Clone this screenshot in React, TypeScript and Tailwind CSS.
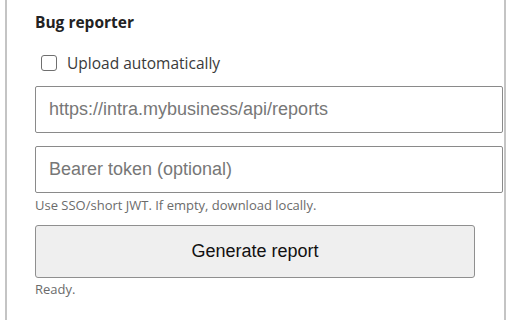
import React from 'react'

const App = () => {
  return (
    <div className="w-[512px] h-[320px] overflow-hidden bg-white">
      {/* panel, only the side borders show in the frame */}
      <div className="ml-[5px] w-[501px] h-[320px] border-x-2 border-[#c4c4c4] bg-white pl-[28px] pt-[11px] font-['Open_Sans',sans-serif]">
        <h3 className="text-[15.5px] font-bold leading-[22px] text-[#222]">Bug reporter</h3>

        <label className="mt-[19px] ml-[6px] flex items-center gap-x-[10px] text-[15.5px] leading-[22px] text-[#3a3a3a]">
          <span className="inline-block h-[16px] w-[16px] rounded-[3px] border-[1.5px] border-[#6f6f6f] bg-white" />
          <span>Upload automatically</span>
        </label>

        <input
          className="mt-[12px] block h-[47px] w-[468px] border border-[#8a8a8a] rounded-[2px] bg-white px-[13px] text-[18px] font-['Liberation_Sans',Arial,sans-serif] text-[#222] outline-none placeholder:text-[#777]"
          placeholder="https://intra.mybusiness/api/reports"
        />

        <input
          className="mt-[13px] block h-[47px] w-[468px] border border-[#8a8a8a] rounded-[2px] bg-white px-[13px] text-[18px] font-['Liberation_Sans',Arial,sans-serif] text-[#222] outline-none placeholder:text-[#777]"
          placeholder="Bearer token (optional)"
        />

        <p className="mt-[3px] text-[13px] leading-[18px] text-[#6b6b6b]">Use SSO/short JWT. If empty, download locally.</p>

        <button className="mt-[11px] block h-[53px] w-[440px] rounded-[3px] border border-[#8f8f8f] bg-[#efefef] text-[18px] font-['Liberation_Sans',Arial,sans-serif] text-[#111]">
          Generate report
        </button>

        <p className="mt-[2px] text-[13px] leading-[18px] text-[#6b6b6b]">Ready.</p>
      </div>
    </div>
  )
}

export default App
